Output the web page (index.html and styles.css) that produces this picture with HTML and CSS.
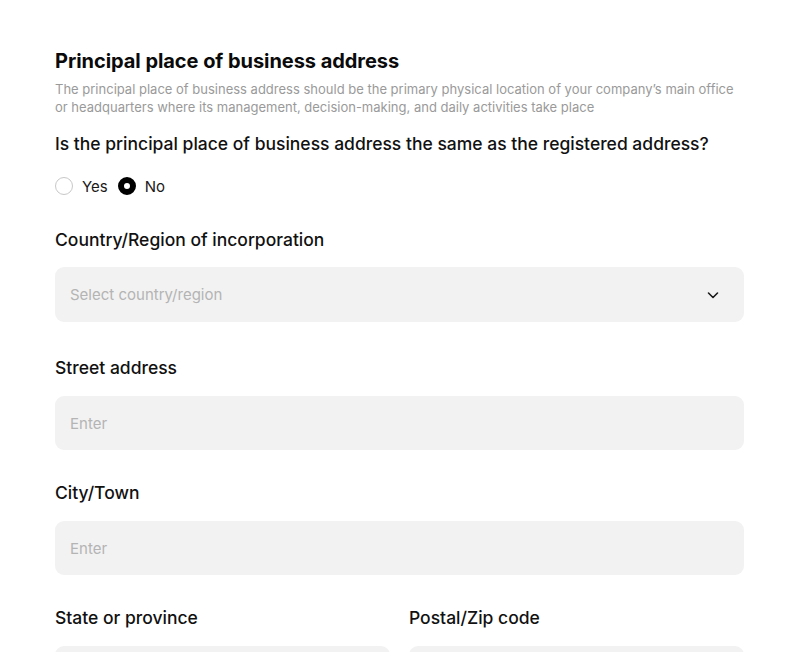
FILE: index.html
```html
<!DOCTYPE html>
<html lang="en">
<head>
<meta charset="utf-8">
<title>Principal place of business address</title>
<link rel="stylesheet" href="styles.css">
</head>
<body>
<main class="form">
  <section class="intro">
    <h1 class="title">Principal place of business address</h1>
    <p class="desc">The principal place of business address should be the primary physical location of your company’s main office or headquarters where its management, decision-making, and daily activities take place</p>
  </section>
  <p class="question">Is the principal place of business address the same as the registered address?</p>
  <div class="radios">
    <label class="radio"><span class="dot"></span><span>Yes</span></label>
    <label class="radio checked"><span class="dot"></span><span>No</span></label>
  </div>
  <div class="fields">
    <div class="field first">
      <div class="label">Country/Region of incorporation</div>
      <div class="input select">
        <span class="ph">Select country/region</span>
        <svg class="chev" width="14" height="14" viewBox="0 0 14 14"><path d="M2.5 5 L7 9.5 L11.5 5" fill="none" stroke="#1a1a1a" stroke-width="1.6" stroke-linecap="round" stroke-linejoin="round"/></svg>
      </div>
    </div>
    <div class="field">
      <div class="label">Street address</div>
      <div class="input"><span class="ph">Enter</span></div>
    </div>
    <div class="field">
      <div class="label">City/Town</div>
      <div class="input"><span class="ph">Enter</span></div>
    </div>
    <div class="row">
      <div class="field">
        <div class="label">State or province</div>
        <div class="input"><span class="ph">Enter</span></div>
      </div>
      <div class="field">
        <div class="label">Postal/Zip code</div>
        <div class="input"><span class="ph">Enter</span></div>
      </div>
    </div>
  </div>
</main>
</body>
</html>
```
FILE: styles.css
```css
* { box-sizing: border-box; }
html, body { margin: 0; padding: 0; background: #fff; }
body {
  font-family: Inter, "Noto Sans", "Liberation Sans", sans-serif;
  color: #111;
  overflow: hidden;
  height: 652px;
}
.form {
  width: 689px;
  margin-left: 55px;
  padding-top: 49px;
  display: flex;
  flex-direction: column;
}
.intro { display: flex; flex-direction: column; gap: 7px; }
.title {
  margin: 0;
  font-size: 20px;
  line-height: 24px;
  font-weight: 700;
  color: #0a0a0a;
  letter-spacing: -0.05px;
}
.desc {
  margin: 0;
  font-size: 13px;
  line-height: 18px;
  color: #9a9a9a;
  padding-right: 8px;
}
.question {
  margin: 16px 0 0;
  font-size: 17.5px;
  line-height: 24px;
  font-weight: 500;
  color: #111;
}
.radios {
  margin-top: 18px;
  display: flex;
  gap: 10px;
  height: 24px;
  align-items: center;
}
.radio {
  display: flex;
  align-items: center;
  gap: 9px;
  font-size: 15px;
  color: #1a1a1a;
}
.dot {
  width: 18px;
  height: 18px;
  border-radius: 50%;
  border: 1.5px solid #c8c8c8;
  background: #fff;
}
.checked .dot {
  border: 6px solid #000;
  background: #fff;
}
.fields {
  margin-top: 30px;
  display: flex;
  flex-direction: column;
  gap: 31px;
}
.field { display: flex; flex-direction: column; gap: 16px; }
.field.first { gap: 15px; margin-bottom: 3px; }
.label {
  font-size: 17.5px;
  line-height: 24px;
  font-weight: 500;
  color: #111;
}
.input {
  height: 54px;
  border-radius: 9px;
  background: #f2f2f2;
  display: flex;
  align-items: center;
  padding: 0 15px;
}
.select { height: 55px; justify-content: space-between; padding-right: 24px; }
.ph { font-size: 15px; color: #b4b4b4; }
.chev { display: block; }
.row {
  display: grid;
  grid-template-columns: 1fr 1fr;
  gap: 19px;
}
```
